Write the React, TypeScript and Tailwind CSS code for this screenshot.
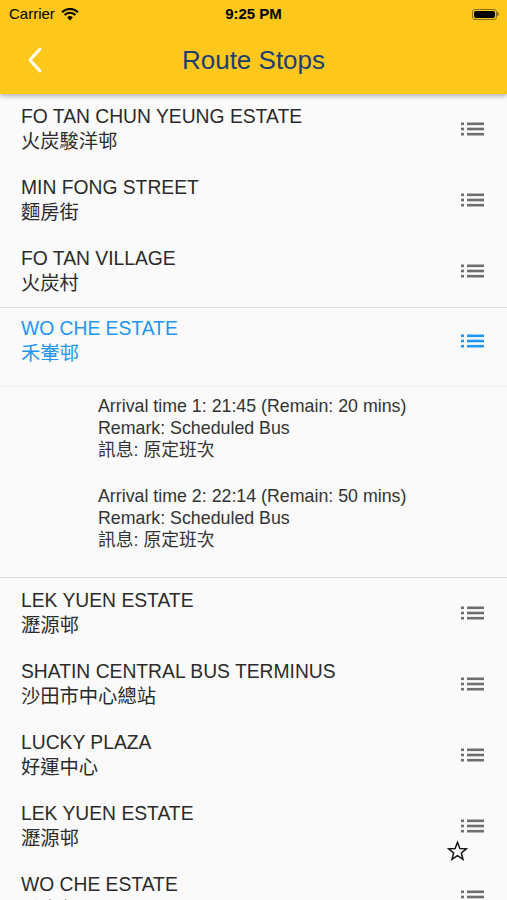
import React from "react";

const stopsTop = [
  { en: "FO TAN CHUN YEUNG ESTATE", zh: "火炭駿洋邨" },
  { en: "MIN FONG STREET", zh: "麵房街" },
  { en: "FO TAN VILLAGE", zh: "火炭村" },
];

const stopsBottom = [
  { en: "LEK YUEN ESTATE", zh: "瀝源邨" },
  { en: "SHATIN CENTRAL BUS TERMINUS", zh: "沙田市中心總站" },
  { en: "LUCKY PLAZA", zh: "好運中心" },
  { en: "LEK YUEN ESTATE", zh: "瀝源邨" },
  { en: "WO CHE ESTATE", zh: "禾輋邨" },
];

const arrivals = [
  { n: 1, time: "21:45", remain: 20 },
  { n: 2, time: "22:14", remain: 50 },
];

const font = { fontFamily: '"Liberation Sans", "Noto Sans CJK TC", sans-serif' };

const ListIcon = ({ color }: { color: string }) => (
  <svg width="23" height="14" viewBox="0 0 23 14" fill={color}>
    <rect x="0" y="0.5" width="3" height="2.6" />
    <rect x="0" y="5.7" width="3" height="2.6" />
    <rect x="0" y="10.9" width="3" height="2.6" />
    <rect x="6" y="0.5" width="17" height="2.6" />
    <rect x="6" y="5.7" width="17" height="2.6" />
    <rect x="6" y="10.9" width="17" height="2.6" />
  </svg>
);

const StopRow = ({ en, zh }: { en: string; zh: string }) => (
  <div className="flex items-center justify-between pl-[21px] pr-[23px] pt-[10px] pb-[11px]">
    <div className="flex flex-col text-[19.3px] leading-[25px] text-[#2b2b2b]">
      <span>{en}</span>
      <span>{zh}</span>
    </div>
    <ListIcon color="#6e6e6e" />
  </div>
);

export default function App() {
  return (
    <div className="relative h-[900px] w-[507px] overflow-hidden bg-[#fafafa]" style={font}>
      <div className="relative z-10 h-[94px] bg-[#fdc71c] shadow-[0_2px_5px_rgba(0,0,0,0.3)]">
        <div className="flex h-[28px] items-center justify-between pl-[9px] pr-[8px] text-[15px] text-black">
          <div className="flex items-center gap-[6px]">
            <span>Carrier</span>
            <svg width="18" height="13" viewBox="0 0 18 13">
              <path d="M9 12.5 L6.2 9.4 A4 4 0 0 1 11.8 9.4 Z" fill="#000" />
              <path d="M3.6 7 A7.6 7.6 0 0 1 14.4 7" stroke="#000" strokeWidth="2.2" fill="none" />
              <path d="M1 4.2 A11.5 11.5 0 0 1 17 4.2" stroke="#000" strokeWidth="2.2" fill="none" />
            </svg>
          </div>
          <span className="absolute left-1/2 -translate-x-1/2 font-bold">9:25 PM</span>
          <div className="flex items-center">
            <div className="h-[11px] w-[25px] rounded-[3px] border border-[#8a7020] p-[1px]">
              <div className="h-full w-full rounded-[2px] bg-black" />
            </div>
            <div className="h-[4px] w-[2px] rounded-r-sm bg-[#8a7020]" />
          </div>
        </div>
        <div className="relative flex h-[66px] items-center justify-center">
          <svg
            className="absolute left-[26px] top-[19px]"
            width="18"
            height="26"
            viewBox="0 0 18 26"
          >
            <path d="M14 2 L4 13 L14 24" stroke="#fff" strokeWidth="3" fill="none" strokeLinecap="round" strokeLinejoin="round" />
          </svg>
          <span className="-mt-[2px] text-[26px] text-[#1d3e72]">Route Stops</span>
        </div>
      </div>

      <div className="flex flex-col">
        {stopsTop.map((s, i) => (
          <StopRow key={i} en={s.en} zh={s.zh} />
        ))}
        <div className="h-px bg-[#e0e0e0]" />
        <div className="flex items-center justify-between pl-[21px] pr-[23px] pt-[8px] pb-[20px]">
          <div className="flex flex-col text-[19.3px] leading-[25px] text-[#2196f3]">
            <span>WO CHE ESTATE</span>
            <span>禾輋邨</span>
          </div>
          <ListIcon color="#2196f3" />
        </div>
        <div className="h-px bg-[#efefef]" />
        <div className="flex flex-col pl-[98px] pt-[8px] pb-[2px] text-[17.8px] leading-[22px] text-[#333]">
          {arrivals.map((a) => (
            <div key={a.n} className="flex flex-col pb-[24px]">
              <span>
                Arrival time {a.n}: {a.time} (Remain: {a.remain} mins)
              </span>
              <span>Remark: Scheduled Bus</span>
              <span>訊息: 原定班次</span>
            </div>
          ))}
        </div>
        <div className="h-px bg-[#e0e0e0]" />
        {stopsBottom.map((s, i) => (
          <StopRow key={i} en={s.en} zh={s.zh} />
        ))}
      </div>

      <svg className="absolute left-[446px] top-[840px]" width="23" height="22" viewBox="0 0 24 24">
        <path
          d="M12 2.5 L14.6 9.2 L21.7 9.6 L16.2 14.1 L18 21 L12 17.1 L6 21 L7.8 14.1 L2.3 9.6 L9.4 9.2 Z"
          fill="none"
          stroke="#111"
          strokeWidth="1.6"
          strokeLinejoin="miter"
        />
      </svg>
    </div>
  );
}
